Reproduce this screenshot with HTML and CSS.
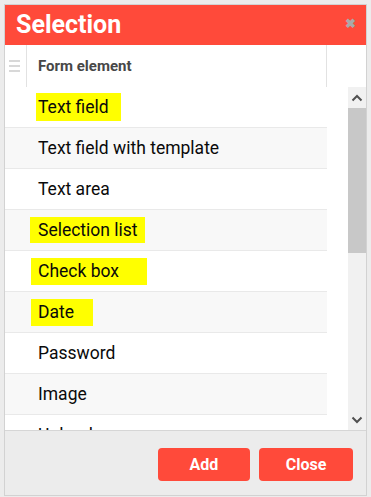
FILE: index.html
```html
<!DOCTYPE html>
<html>
<head>
<meta charset="utf-8">
<link rel="stylesheet" href="styles.css">
</head>
<body>
<div class="dialog">
  <div class="titlebar">
    <span class="title">Selection</span>
    <span class="close-x">&#x2716;</span>
  </div>
  <div class="grid-head">
    <div class="handle-cell"><span class="bar"></span><span class="bar"></span><span class="bar"></span></div>
    <div class="col-head">Form element</div>
    <div class="head-rest"></div>
  </div>
  <div class="grid-body">
    <div class="rows">
      <div class="row"><span class="hl hl-1">Text field</span></div>
      <div class="row alt">Text field with template</div>
      <div class="row">Text area</div>
      <div class="row alt"><span class="hl hl-2">Selection list</span></div>
      <div class="row"><span class="hl hl-3">Check box</span></div>
      <div class="row alt"><span class="hl hl-4">Date</span></div>
      <div class="row">Password</div>
      <div class="row alt">Image</div>
      <div class="row">Upload</div>
    </div>
    <div class="gap"></div>
    <div class="scrollbar">
      <div class="sb-btn"><svg width="12" height="8" viewBox="0 0 12 8"><path d="M1.5 6.5 L6 2 L10.5 6.5" fill="none" stroke="#505050" stroke-width="2"/></svg></div>
      <div class="sb-thumb"></div>
      <div class="sb-track"></div>
      <div class="sb-btn"><svg width="12" height="8" viewBox="0 0 12 8"><path d="M1.5 1.5 L6 6 L10.5 1.5" fill="none" stroke="#505050" stroke-width="2"/></svg></div>
    </div>
  </div>
  <div class="footer">
    <button class="btn btn-add">Add</button>
    <button class="btn btn-close">Close</button>
  </div>
</div>
</body>
</html>
```

FILE: styles.css
```css
html, body {
  margin: 0;
  padding: 0;
  background: #ececec;
  font-family: Roboto, "Liberation Sans", sans-serif;
}
.dialog {
  margin: 4px;
  width: 361px;
  height: 490px;
  border: 1px solid #d2d2d2;
  display: flex;
  flex-direction: column;
  background: #ececec;
}
.titlebar {
  height: 40px;
  background: #ff4a3a;
  display: flex;
  align-items: center;
  justify-content: space-between;
  padding: 0 10px 0 11px;
}
.title {
  color: #fff;
  font-weight: 700;
  font-size: 25px;
  line-height: 40px;
}
.close-x {
  color: #a9a9a9;
  font-size: 13px;
  font-weight: 700;
  margin-top: -4px;
}
.grid-head {
  height: 42px;
  background: #fff;
  display: flex;
}
.handle-cell {
  width: 22px;
  border-right: 1px solid #e2e2e2;
  display: flex;
  flex-direction: column;
  align-items: flex-start;
  padding-top: 15px;
  padding-left: 4px;
  box-sizing: border-box;
  gap: 3px;
}
.bar {
  display: block;
  width: 11px;
  height: 2px;
  background: #d8d8d8;
}
.col-head {
  width: 300px;
  border-right: 1px solid #e2e2e2;
  box-sizing: border-box;
  padding-left: 11px;
  font-size: 15px;
  font-weight: 700;
  color: #474747;
  line-height: 42px;
}
.head-rest {
  flex: 1;
}
.grid-body {
  height: 343px;
  background: #fff;
  display: flex;
  overflow: hidden;
  border-bottom: 1px solid #d6d6d6;
}
.rows {
  width: 322px;
  flex: none;
}
.row {
  height: 40px;
  border-bottom: 1px solid #e9e9e9;
  padding-left: 33px;
  display: flex;
  align-items: center;
  font-size: 17.5px;
  color: #0a0a0a;
  background: #fff;
}
.row.alt {
  background: #f8f8f8;
}
.hl {
  background: #ffff00;
  display: inline-block;
}
.hl-1 {
  margin-left: -2px;
  padding: 0 12px 0 2px;
  line-height: 28px;
  margin-top: -1px;
}
.hl-2 {
  margin-left: -8px;
  padding: 0 7px 0 8px;
  line-height: 26px;
}
.hl-3 {
  margin-left: -7px;
  padding: 0 28px 0 7px;
  line-height: 27px;
}
.hl-4 {
  margin-left: -7px;
  padding: 0 19px 0 7px;
  line-height: 27px;
}
.gap {
  flex: 1;
}
.scrollbar {
  width: 18px;
  background: #f1f1f1;
  display: flex;
  flex-direction: column;
}
.sb-btn {
  height: 21px;
  display: flex;
  align-items: center;
  justify-content: center;
}
.sb-thumb {
  height: 145px;
  background: #c8c8c8;
}
.sb-track {
  flex: 1;
}
.footer {
  flex: 1;
  display: flex;
  justify-content: flex-end;
  align-items: flex-start;
  padding: 17px 13px 0 0;
  gap: 9px;
}
.btn {
  height: 33px;
  border: none;
  border-radius: 4px;
  background: #ff4a3a;
  color: #fff;
  font-family: Roboto, "Liberation Sans", sans-serif;
  font-weight: 700;
  font-size: 16px;
  padding: 0;
}
.btn-add {
  width: 92px;
}
.btn-close {
  width: 94px;
}
```
